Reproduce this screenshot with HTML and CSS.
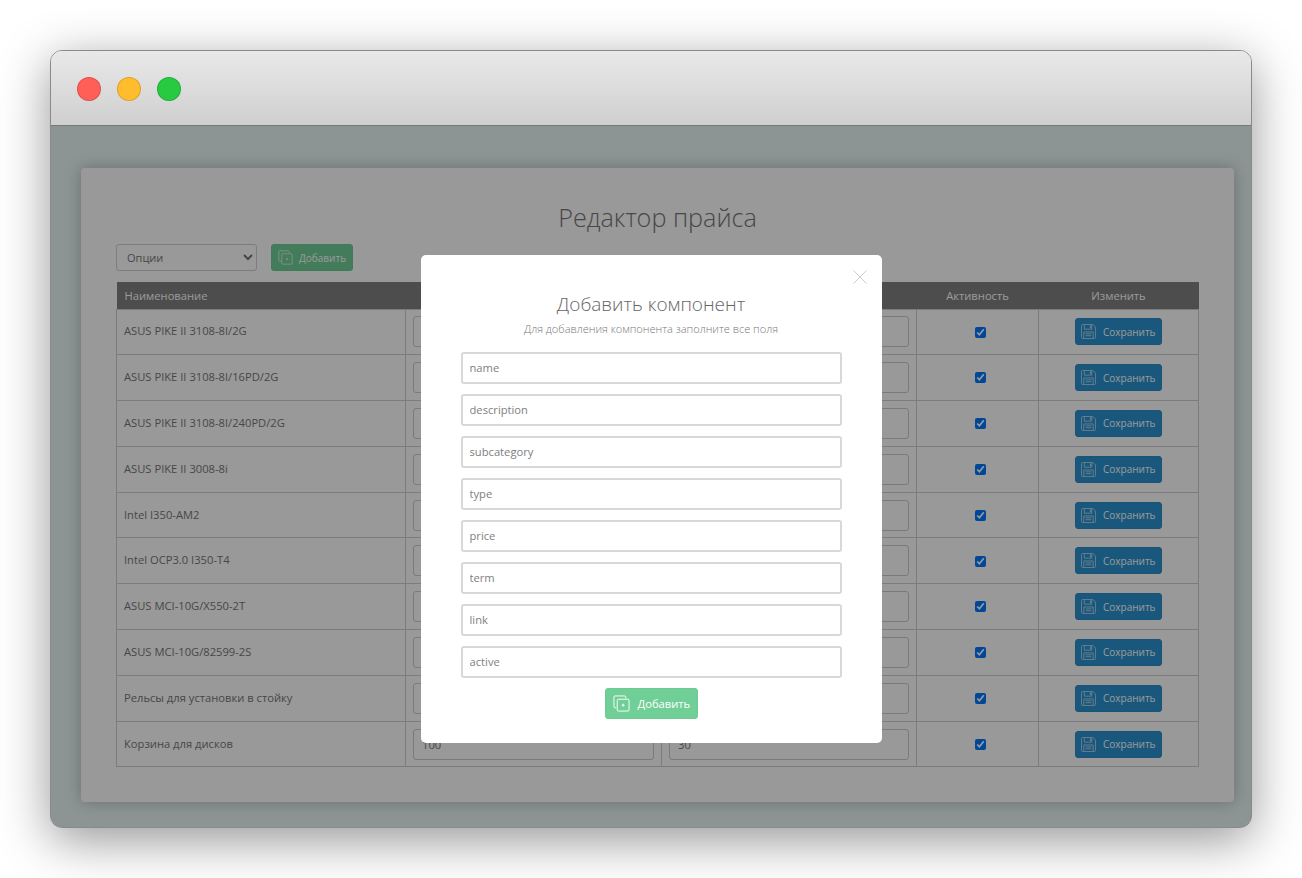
FILE: index.html
```html
<!DOCTYPE html>
<html lang="ru">
<head>
<meta charset="utf-8">
<title>Редактор прайса</title>
<link rel="stylesheet" href="styles.css">
</head>
<body>
<svg class="defs" width="0" height="0" aria-hidden="true">
  <symbol id="i-add" viewBox="0 0 18 18">
    <path d="M3.5 13.5H2.2a1.2 1.2 0 0 1-1.2-1.2V2.2A1.2 1.2 0 0 1 2.2 1h10.1a1.2 1.2 0 0 1 1.2 1.2v1.3" fill="none" stroke="currentColor"/>
    <rect x="4.5" y="4.5" width="12.5" height="12.5" rx="1.2" fill="none" stroke="currentColor"/>
    <path d="M10.75 9.2v3.1M9.2 10.75h3.1" fill="none" stroke="currentColor"/>
  </symbol>
  <symbol id="i-save" viewBox="0 0 16 16">
    <path d="M1.5 .5h11.2l2.8 2.8v11a1.2 1.2 0 0 1-1.2 1.2H1.7a1.2 1.2 0 0 1-1.2-1.2V1.7A1.2 1.2 0 0 1 1.5 .5z" fill="none" stroke="currentColor"/>
    <path d="M3.5 .5v5h8v-5M3 15.5V8.5h10v7M5 10.5h6M5 12.5h6" fill="none" stroke="currentColor"/>
    <path d="M9.5 1.5h1.5v3H9.5z" fill="currentColor"/>
  </symbol>
</svg>
<main class="window">
  <header class="titlebar">
    <span class="dot dot-red"></span>
    <span class="dot dot-yellow"></span>
    <span class="dot dot-green"></span>
  </header>
  <div class="content">
    <section class="card">
      <h1 class="page-title">Редактор прайса</h1>
      <div class="toolbar">
        <select class="select"><option>Опции</option></select>
        <button class="btn btn-green" type="button"><svg class="ico-add"><use href="#i-add"/></svg>Добавить</button>
      </div>
      <table class="price">
        <colgroup>
          <col class="c-name"><col class="c-price"><col class="c-term"><col class="c-active"><col class="c-edit">
        </colgroup>
        <thead>
          <tr><th class="left">Наименование</th><th>Цена</th><th>Срок</th><th>Активность</th><th>Изменить</th></tr>
        </thead>
        <tbody>
          <tr><td class="name">ASUS PIKE II 3108-8I/2G</td><td><input class="cell-input" value="100"></td><td><input class="cell-input" value="30"></td><td class="center"><input type="checkbox" checked></td><td class="center"><button class="btn btn-blue" type="button"><svg class="ico-save"><use href="#i-save"/></svg>Сохранить</button></td></tr>
          <tr><td class="name">ASUS PIKE II 3108-8I/16PD/2G</td><td><input class="cell-input" value="100"></td><td><input class="cell-input" value="30"></td><td class="center"><input type="checkbox" checked></td><td class="center"><button class="btn btn-blue" type="button"><svg class="ico-save"><use href="#i-save"/></svg>Сохранить</button></td></tr>
          <tr><td class="name">ASUS PIKE II 3108-8I/240PD/2G</td><td><input class="cell-input" value="100"></td><td><input class="cell-input" value="30"></td><td class="center"><input type="checkbox" checked></td><td class="center"><button class="btn btn-blue" type="button"><svg class="ico-save"><use href="#i-save"/></svg>Сохранить</button></td></tr>
          <tr><td class="name">ASUS PIKE II 3008-8i</td><td><input class="cell-input" value="100"></td><td><input class="cell-input" value="30"></td><td class="center"><input type="checkbox" checked></td><td class="center"><button class="btn btn-blue" type="button"><svg class="ico-save"><use href="#i-save"/></svg>Сохранить</button></td></tr>
          <tr><td class="name">Intel I350-AM2</td><td><input class="cell-input" value="100"></td><td><input class="cell-input" value="30"></td><td class="center"><input type="checkbox" checked></td><td class="center"><button class="btn btn-blue" type="button"><svg class="ico-save"><use href="#i-save"/></svg>Сохранить</button></td></tr>
          <tr><td class="name">Intel OCP3.0 I350-T4</td><td><input class="cell-input" value="100"></td><td><input class="cell-input" value="30"></td><td class="center"><input type="checkbox" checked></td><td class="center"><button class="btn btn-blue" type="button"><svg class="ico-save"><use href="#i-save"/></svg>Сохранить</button></td></tr>
          <tr><td class="name">ASUS MCI-10G/X550-2T</td><td><input class="cell-input" value="100"></td><td><input class="cell-input" value="30"></td><td class="center"><input type="checkbox" checked></td><td class="center"><button class="btn btn-blue" type="button"><svg class="ico-save"><use href="#i-save"/></svg>Сохранить</button></td></tr>
          <tr><td class="name">ASUS MCI-10G/82599-2S</td><td><input class="cell-input" value="100"></td><td><input class="cell-input" value="30"></td><td class="center"><input type="checkbox" checked></td><td class="center"><button class="btn btn-blue" type="button"><svg class="ico-save"><use href="#i-save"/></svg>Сохранить</button></td></tr>
          <tr><td class="name">Рельсы для установки в стойку</td><td><input class="cell-input" value="100"></td><td><input class="cell-input" value="30"></td><td class="center"><input type="checkbox" checked></td><td class="center"><button class="btn btn-blue" type="button"><svg class="ico-save"><use href="#i-save"/></svg>Сохранить</button></td></tr>
          <tr><td class="name">Корзина для дисков</td><td><input class="cell-input" value="100"></td><td><input class="cell-input" value="30"></td><td class="center"><input type="checkbox" checked></td><td class="center"><button class="btn btn-blue" type="button"><svg class="ico-save"><use href="#i-save"/></svg>Сохранить</button></td></tr>
        </tbody>
      </table>
    </section>
    <div class="overlay">
      <form class="modal">
        <svg class="close" viewBox="0 0 14 14"><path d="M.5 .5l13 13M13.5 .5l-13 13" fill="none" stroke="currentColor"/></svg>
        <h2 class="modal-title">Добавить компонент</h2>
        <p class="modal-sub">Для добавления компонента заполните все поля</p>
        <div class="fields">
          <input class="field" placeholder="name">
          <input class="field" placeholder="description">
          <input class="field" placeholder="subcategory">
          <input class="field" placeholder="type">
          <input class="field" placeholder="price">
          <input class="field" placeholder="term">
          <input class="field" placeholder="link">
          <input class="field" placeholder="active">
        </div>
        <button class="btn btn-green btn-large" type="button"><svg class="ico-add-large"><use href="#i-add"/></svg>Добавить</button>
      </form>
    </div>
  </div>
</main>
</body>
</html>
```

FILE: styles.css
```css
* { box-sizing: border-box; }

html, body { height: 100%; }

body {
  margin: 0;
  padding: 50px;
  background: #fff;
  overflow: hidden;
  font-family: "Open Sans", "Liberation Sans", sans-serif;
  color: #666;
}

.defs { display: block; height: 0; }

.window {
  width: 1202px;
  height: 778px;
  display: flex;
  flex-direction: column;
  border: 1px solid #8a8a8a;
  border-radius: 12px;
  background: #eaf7f7;
  box-shadow: 0 12px 50px rgba(0, 0, 0, .42);
}

.titlebar {
  height: 75px;
  flex: none;
  display: flex;
  align-items: center;
  gap: 16px;
  padding: 2px 0 0 26px;
  background: linear-gradient(#e9e9e9, #cfcfcf);
  border-bottom: 1px solid #777;
  border-radius: 11px 11px 0 0;
}

.dot {
  width: 24px;
  height: 24px;
  border-radius: 50%;
  border: 1px solid rgba(0, 0, 0, .14);
}
.dot-red { background: #ff5f57; }
.dot-yellow { background: #ffbd2e; }
.dot-green { background: #28ca42; }

.content {
  position: relative;
  flex: 1;
  padding: 42px 17px 25px 30px;
  border-radius: 0 0 11px 11px;
  overflow: hidden;
}

.card {
  height: 100%;
  padding: 34px 35px 0;
  background: #fff;
  border-radius: 4px;
  box-shadow: 0 0 16px rgba(0, 0, 0, .25);
}

.page-title {
  margin: 0;
  font-size: 25.2px;
  font-weight: 300;
  line-height: 30px;
  text-align: center;
  color: #777;
}

.toolbar {
  display: flex;
  gap: 14px;
  margin: 12px 0 11px;
}

.select {
  width: 141px;
  height: 27px;
  padding: 0 4px 0 6px;
  font: 11px "Open Sans", sans-serif;
  color: #777;
  background: #fff;
  border: 1px solid #d0d0d0;
  border-radius: 3px;
}

.btn {
  display: inline-flex;
  align-items: center;
  border: 1px solid transparent;
  border-radius: 3px;
  font-family: "Open Sans", sans-serif;
  font-size: 10px;
  color: #fff;
  cursor: pointer;
}

.btn-green {
  width: 82px;
  height: 27px;
  padding: 0 0 0 6px;
  gap: 6px;
  background: #70cf96;
  border-color: #6ccb92;
}

.ico-add { width: 15px; height: 15px; opacity: .8; }
.ico-add-large { width: 17px; height: 17px; }

.btn-large {
  width: 93px;
  height: 31px;
  padding-left: 7px;
  font-size: 11.2px;
  gap: 8px;
}

.btn-blue {
  width: 87px;
  height: 27px;
  padding: 0 0 0 5px;
  gap: 7px;
  background: #2b92d0;
  border-color: #2a8ac4;
}

.ico-save { width: 15px; height: 15px; opacity: .6; }

.price {
  width: 1082px;
  table-layout: fixed;
  border-collapse: collapse;
  font-size: 11.2px;
  color: #777;
}

.c-name { width: 289px; }
.c-price { width: 256px; }
.c-term { width: 255px; }
.c-active { width: 122px; }
.c-edit { width: 160px; }

.price th {
  height: 27px;
  padding: 0;
  background: #808080;
  font-weight: 400;
  color: #fff;
  text-align: center;
}

.price th.left { padding-left: 8px; text-align: left; }

.price td {
  height: 45.8px;
  padding: 0 7px;
  border: 1px solid #cfcfcf;
}

.price td.name { padding-bottom: 2px; }

.price td.center { text-align: center; vertical-align: middle; padding: 0; }

.price input[type="checkbox"] {
  width: 11px;
  height: 11px;
  margin: 0 0 2px 6px;
  vertical-align: middle;
}
.price .btn { vertical-align: middle; }

.cell-input {
  display: block;
  width: 100%;
  height: 31px;
  padding: 0 8px;
  font: 11.2px "Open Sans", sans-serif;
  color: #777;
  background: #fff;
  border: 1px solid #ccc;
  border-radius: 3px;
}

.overlay {
  position: absolute;
  inset: 0;
  display: flex;
  justify-content: center;
  align-items: flex-start;
  padding-top: 129px;
  background: rgba(0, 0, 0, .4);
}

.modal {
  position: relative;
  width: 461px;
  height: 488px;
  display: flex;
  flex-direction: column;
  align-items: center;
  padding-top: 37px;
  background: #fff;
  border-radius: 5px;
}

.close {
  position: absolute;
  top: 15px;
  right: 15px;
  width: 14px;
  height: 14px;
  color: #ccc;
}

.modal-title {
  margin: 0;
  font-size: 19px;
  font-weight: 300;
  line-height: 24px;
  color: #666;
}

.modal-sub {
  margin: 4px 0 14px;
  font-size: 11px;
  font-weight: 300;
  line-height: 18px;
  color: #777;
}

.fields {
  display: flex;
  flex-direction: column;
  gap: 10px;
  width: 381px;
  margin-bottom: 10px;
}

.field {
  height: 32px;
  padding: 0 7px 2px;
  font: 11.2px "Open Sans", sans-serif;
  color: #777;
  background: #fff;
  border: 2px solid #d8d8d8;
  border-radius: 3px;
}

.field::placeholder { color: #808080; opacity: 1; }
```
